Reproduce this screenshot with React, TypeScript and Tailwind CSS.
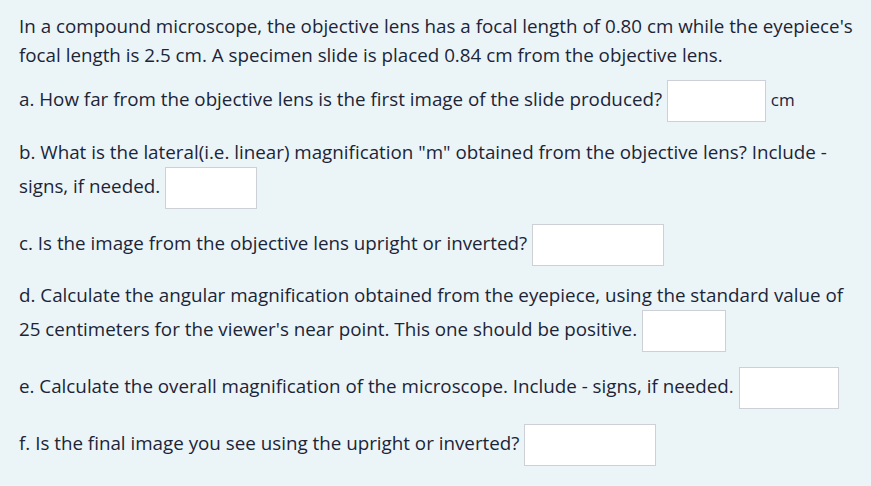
import React from "react";

function Box({ w }: { w: string }) {
  return (
    <span
      className={`inline-block h-[42px] border border-[#cdd1d7] bg-white align-middle ${w}`}
    />
  );
}

export default function App() {
  return (
    <div
      className="min-h-[486px] w-[871px] bg-[#ebf5f8] px-[19px] pt-[12px] text-[18.8px] leading-[29px] text-[#1c2437] whitespace-nowrap [font-variant-ligatures:none]"
      style={{ fontFamily: "'Open Sans', sans-serif" }}
    >
      <p className="mb-[10px]">
        In a compound microscope, the objective lens has a focal length of 0.80 cm while the eyepiece's
        <br />
        focal length is 2.5 cm. A specimen slide is placed 0.84 cm from the objective lens.
      </p>
      <p className="mb-[16px]">
        a. How far from the objective lens is the first image of the slide produced?{" "}
        <Box w="w-[99px]" /> <span className="text-[17px]">cm</span>
      </p>
      <p className="mb-[15px]">
        b. What is the lateral(i.e. linear) magnification "m" obtained from the objective lens? Include -
        <br />
        signs, if needed. <Box w="w-[92px]" />
      </p>
      <p className="mb-[15px]">
        c. Is the image from the objective lens upright or inverted? <Box w="w-[132px]" />
      </p>
      <p className="mb-[15px]">
        d. Calculate the angular magnification obtained from the eyepiece, using the standard value of
        <br />
        25 centimeters for the viewer's near point. This one should be positive. <Box w="w-[84px]" />
      </p>
      <p className="mb-[15px]">
        e. Calculate the overall magnification of the microscope. Include - signs, if needed.{" "}
        <Box w="w-[100px]" />
      </p>
      <p className="mb-[15px]">
        f. Is the final image you see using the upright or inverted? <Box w="w-[132px]" />
      </p>
    </div>
  );
}
